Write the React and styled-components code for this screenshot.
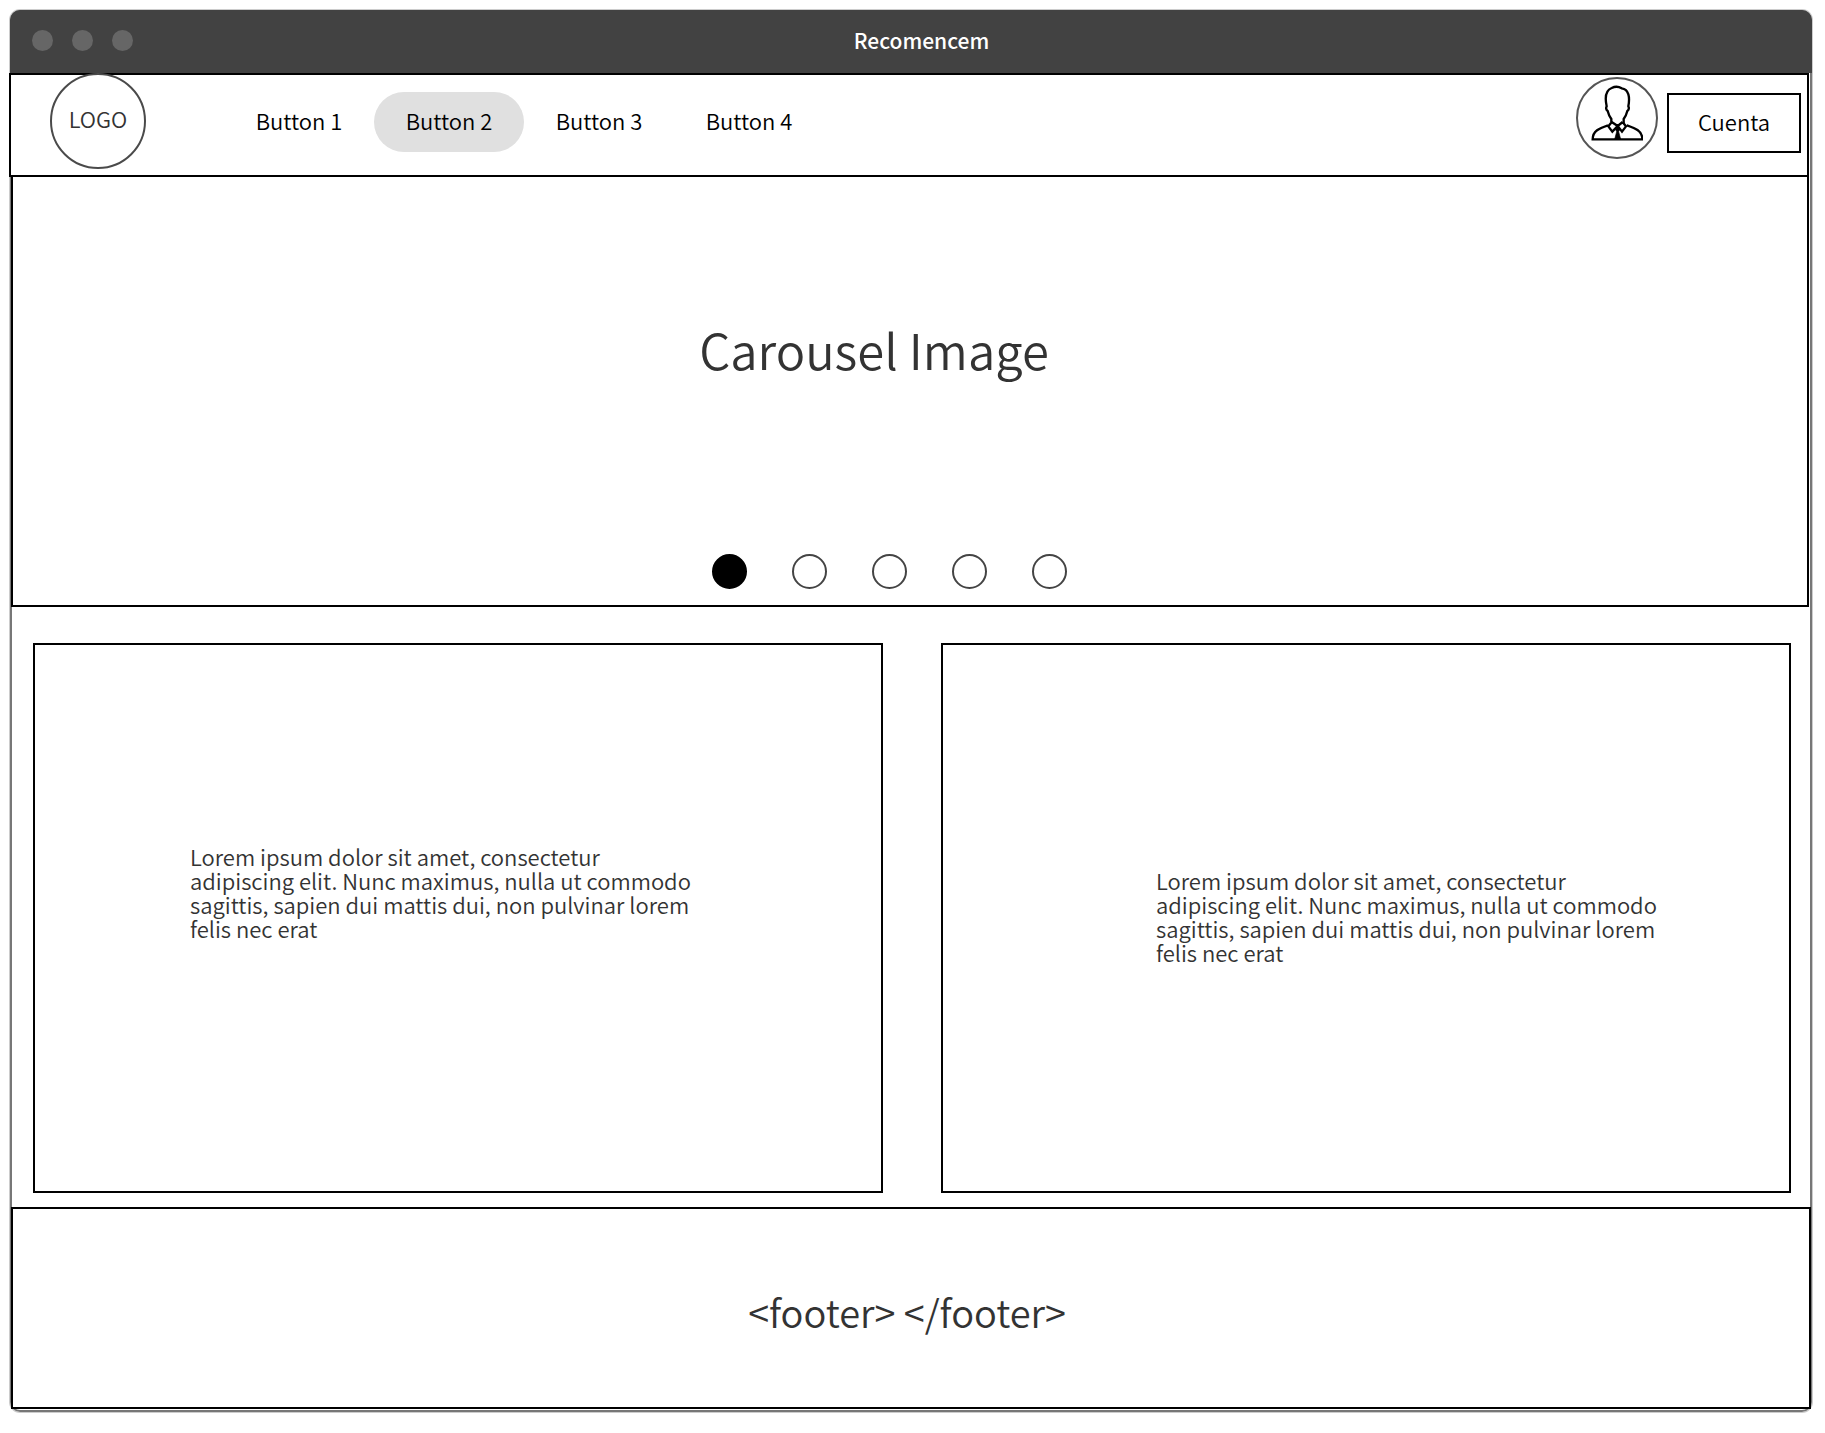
import React, { useState } from "react";
import styled, { createGlobalStyle } from "styled-components";

const GlobalStyle = createGlobalStyle`
  *, *::before, *::after { box-sizing: border-box; }
  body {
    margin: 0;
    background: #fff;
    color: #333;
    font-family: "Noto Sans CJK SC", "Noto Sans", sans-serif;
    font-size: 22px;
    font-weight: 350;
    line-height: 24px;
  }
  button { font: inherit; cursor: pointer; }
`;

const Window = styled.div`
  margin: 10px 13px 20px 10px;
  padding-bottom: 3px;
  border-radius: 10px;
  background: #fff;
  box-shadow: inset 0 0 0 2px #777, 0 0 0 1px #ccc;
`;

const TitleBar = styled.div`
  display: flex;
  align-items: center;
  height: 63px;
  padding: 0 102px 3px 22px;
  border-radius: 10px 10px 0 0;
  background: #424242;
`;

const Lights = styled.div`
  display: flex;
  gap: 19px;
`;

const Light = styled.span`
  width: 21px;
  height: 21px;
  border-radius: 50%;
  background: #666;
`;

const Title = styled.div`
  flex: 1;
  text-align: center;
  color: #fff;
  font-size: 21px;
  font-weight: 500;
`;

const Header = styled.header`
  display: flex;
  align-items: flex-start;
  height: 104px;
  margin: 0 3px 0 -1px;
  padding: 0 6px 0 39px;
  border: 2px solid #000;
  background: #fff;
`;

const Logo = styled.a`
  display: flex;
  align-items: center;
  justify-content: center;
  width: 96px;
  height: 96px;
  margin-top: -2px;
  padding-bottom: 6px;
  border: 2px solid #4a4a4a;
  border-radius: 50%;
  color: #333;
  text-decoration: none;
`;

const Nav = styled.nav`
  display: flex;
  margin: 17px auto 0 78px;
`;

const NavButton = styled.button`
  width: 150px;
  height: 60px;
  padding: 0 0 4px;
  border: 0;
  border-radius: 30px;
  background: ${(p) => (p.$active ? "#e0e0e0" : "transparent")};
  color: #000;
`;

const Avatar = styled.div`
  display: flex;
  justify-content: center;
  width: 82px;
  height: 82px;
  margin: 2px 9px 0 0;
  padding-top: 6px;
  border: 2px solid #555;
  border-radius: 50%;
`;

const AccountButton = styled.button`
  width: 134px;
  height: 60px;
  margin-top: 18px;
  padding: 0 0 4px;
  border: 2px solid #000;
  background: #fff;
  color: #000;
`;

const Carousel = styled.section`
  display: flex;
  flex-direction: column;
  align-items: center;
  justify-content: space-between;
  height: 430px;
  margin: 0 3px 0 1px;
  padding: 136px 0 16px;
  border: 2px solid #000;
  border-top: 0;
`;

const CarouselTitle = styled.h1`
  margin: 0;
  padding-right: 72px;
  font-size: 49px;
  line-height: 72px;
  font-weight: 350;
`;

const Dots = styled.div`
  display: flex;
  gap: 45px;
  padding-right: 42px;
`;

const Dot = styled.button`
  width: 35px;
  height: 35px;
  padding: 0;
  border: 2px solid ${(p) => (p.$active ? "#000" : "#444")};
  border-radius: 50%;
  background: ${(p) => (p.$active ? "#000" : "#fff")};
`;

const Cards = styled.main`
  display: grid;
  grid-template-columns: 1fr 1fr;
  gap: 58px;
  padding: 36px 21px 14px 23px;
`;

const Card = styled.article`
  height: 550px;
  padding: ${(p) => (p.$inset ? "223px 0 0 213px" : "199px 0 0 155px")};
  border: 2px solid #000;
`;

const CardText = styled.p`
  max-width: 510px;
  margin: 0;
`;

const Footer = styled.footer`
  display: flex;
  align-items: center;
  justify-content: center;
  height: 202px;
  margin: 0 1px;
  padding: 8px 8px 0 0;
  border: 2px solid #000;
  background: #fff;
  font-size: 38px;
  line-height: 56px;
`;

const lorem =
  "Lorem ipsum dolor sit amet, consectetur adipiscing elit. Nunc maximus, nulla ut commodo sagittis, sapien dui mattis dui, non pulvinar lorem felis nec erat";

function PersonIcon() {
  return (
    <svg width="52" height="56" viewBox="153 255 156 168" fill="none" stroke="#000" strokeWidth="7" aria-hidden="true">
      <path d="M214 371v-14c-6-8-9-16-11-24-4-3-6-8-3-14-6-28-3-48 15-55 10-5 22-4 30 1 22 3 25 27 20 54 3 6 1 11-3 14-2 8-5 16-11 24v14" />
      <path d="M213 369l-8 10 12 16 16-17-18-12M250 369l8 10-12 16-13-17 15-12" />
      <path d="M204 376c-26 9-46 16-46 42h149c0-26-21-33-47-42" />
      <path d="M233 378l6 11-3 6 6 23h-18l6-23-3-6z" fill="#000" strokeWidth="2" />
    </svg>
  );
}

export default function App() {
  const [page, setPage] = useState(2);
  const [slide, setSlide] = useState(0);
  return (
    <>
      <GlobalStyle />
      <Window>
        <TitleBar>
          <Lights>
            <Light />
            <Light />
            <Light />
          </Lights>
          <Title>Recomencem</Title>
        </TitleBar>
        <Header>
          <Logo href="#">LOGO</Logo>
          <Nav>
            {[1, 2, 3, 4].map((n) => (
              <NavButton key={n} $active={n === page} onClick={() => setPage(n)}>
                Button {n}
              </NavButton>
            ))}
          </Nav>
          <Avatar>
            <PersonIcon />
          </Avatar>
          <AccountButton>Cuenta</AccountButton>
        </Header>
        <Carousel>
          <CarouselTitle>Carousel Image</CarouselTitle>
          <Dots>
            {[0, 1, 2, 3, 4].map((n) => (
              <Dot key={n} $active={n === slide} aria-label={`Slide ${n + 1}`} onClick={() => setSlide(n)} />
            ))}
          </Dots>
        </Carousel>
        <Cards>
          <Card>
            <CardText>{lorem}</CardText>
          </Card>
          <Card $inset>
            <CardText>{lorem}</CardText>
          </Card>
        </Cards>
        <Footer>&lt;footer&gt; &lt;/footer&gt;</Footer>
      </Window>
    </>
  );
}
